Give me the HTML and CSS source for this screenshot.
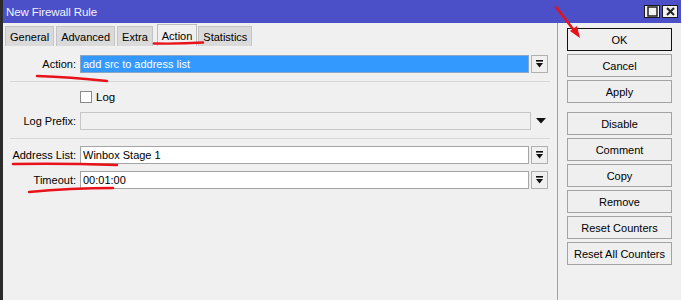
FILE: index.html
```html
<!DOCTYPE html>
<html>
<head>
<meta charset="utf-8">
<link rel="stylesheet" href="styles.css">
</head>
<body>
<div class="window">
  <div class="titlebar">
    <span class="title">New Firewall Rule</span>
    <div class="tbtns">
      <span class="tbtn"><svg width="11" height="11" viewBox="0 0 11 11"><rect x="1" y="1" width="9" height="9" fill="none" stroke="#222" stroke-width="1.5"/></svg></span>
      <span class="tbtn"><svg width="11" height="11" viewBox="0 0 11 11"><path d="M2 2 L9 9 M9 2 L2 9" stroke="#222" stroke-width="2"/></svg></span>
    </div>
  </div>
  <div class="main">
    <div class="left">
      <div class="tabs">
        <span class="tab">General</span>
        <span class="tab">Advanced</span>
        <span class="tab">Extra</span>
        <span class="tab active">Action</span>
        <span class="tab">Statistics</span>
      </div>
      <div class="panel">
        <div class="row r-action">
          <label class="lbl">Action:</label>
          <div class="field sel">add src to address list</div>
          <span class="dd"><svg width="9" height="9" viewBox="0 0 9 9"><rect x="1" y="0" width="7" height="1.6" fill="#111"/><path d="M1 3 H8 L4.5 7.5 Z" fill="#111"/></svg></span>
        </div>
        <div class="sep"></div>
        <div class="row r-log">
          <span class="lbl"></span>
          <span class="check"></span><span class="logtxt">Log</span>
        </div>
        <div class="row r-prefix">
          <label class="lbl">Log Prefix:</label>
          <div class="field dis"></div>
          <span class="arrow"><svg width="10" height="6" viewBox="0 0 10 6"><path d="M0 0 H10 L5 5.5 Z" fill="#111"/></svg></span>
        </div>
        <div class="sep"></div>
        <div class="row r-addr">
          <label class="lbl">Address List:</label>
          <div class="field">Winbox Stage 1</div>
          <span class="dd"><svg width="9" height="9" viewBox="0 0 9 9"><rect x="1" y="0" width="7" height="1.6" fill="#111"/><path d="M1 3 H8 L4.5 7.5 Z" fill="#111"/></svg></span>
        </div>
        <div class="row r-time">
          <label class="lbl">Timeout:</label>
          <div class="field">00:01:00</div>
          <span class="dd"><svg width="9" height="9" viewBox="0 0 9 9"><rect x="1" y="0" width="7" height="1.6" fill="#111"/><path d="M1 3 H8 L4.5 7.5 Z" fill="#111"/></svg></span>
        </div>
      </div>
    </div>
    <div class="right">
      <button class="btn ok">OK</button>
      <button class="btn">Cancel</button>
      <button class="btn">Apply</button>
      <button class="btn gap">Disable</button>
      <button class="btn">Comment</button>
      <button class="btn">Copy</button>
      <button class="btn">Remove</button>
      <button class="btn">Reset Counters</button>
      <button class="btn">Reset All Counters</button>
    </div>
  </div>
  <svg class="marks" width="682" height="300" viewBox="0 0 682 300">
    <g stroke="#e8121a" stroke-width="2.5" fill="none" stroke-linecap="round">
      <path d="M154 43.5 Q180 44 203 42.5"/>
      <path d="M37 76 Q70 77 107 81"/>
      <path d="M13 164 Q60 163 117 165"/>
      <path d="M29 192 Q70 188 113 188"/>
      <path d="M556 7 L576 33"/>
    </g>
    <path d="M580 38 L570 31 L577 26 Z" fill="#e8121a"/>
  </svg>
</div>
</body>
</html>
```

FILE: styles.css
```css
* { box-sizing: border-box; }
html, body { margin: 0; padding: 0; }
body {
  width: 682px;
  height: 300px;
  overflow: hidden;
  font-family: "Liberation Sans", Arial, sans-serif;
  font-size: 11px;
  color: #000;
  background: #f0f0f0;
}
.window {
  position: relative;
  width: 682px;
  height: 300px;
  background: #f0f0f0;
  border-left: 3px solid #2b2b2b;
  border-right: 1px solid #ffffff;
  display: flex;
  flex-direction: column;
}
.titlebar {
  height: 23px;
  flex: none;
  background: #4b4fc8;
  display: flex;
  align-items: center;
  justify-content: space-between;
  padding: 0 3px 0 3px;
}
.title {
  color: #f4f4ff;
  font-size: 11.5px;
  letter-spacing: -0.1px;
}
.tbtns { display: flex; gap: 2px; }
.tbtn {
  width: 16px;
  height: 13px;
  background: #f2f2f2;
  border: 1px solid #1a1a1a;
  display: flex;
  align-items: center;
  justify-content: center;
}
.main {
  flex: 1;
  display: flex;
}
.left {
  width: 555px;
  border-right: 1px solid #a0a0a0;
  display: flex;
  flex-direction: column;
}
.tabs {
  display: flex;
  gap: 2px;
  padding: 3px 0 0 2px;
  height: 23px;
  align-items: flex-end;
}
.tab {
  height: 20px;
  padding: 0 4px;
  background: #dadada;
  border: 1px solid #c4c4c4;
  border-bottom: none;
  display: flex;
  align-items: center;
}
.tab.active {
  height: 22px;
  margin-left: 2px;
  margin-right: -1px;
  background: #f0f0f0;
  border-color: #bdbdbd;
}
.panel {
  flex: 1;
  border-top: 1px solid #f0f0f0;
  padding: 8px 0 0 0;
}
.row {
  display: flex;
  align-items: center;
  height: 18px;
}
.lbl {
  width: 77px;
  flex: none;
  text-align: right;
  padding-right: 4px;
}
.field {
  width: 449px;
  height: 18px;
  background: #fff;
  border: 1px solid #a5a5a5;
  padding: 1px 2px 0 2px;
  line-height: 15px;
  white-space: nowrap;
}
.field.sel {
  background: #3399ff;
  color: #fff;
  border-color: #8aa6c2;
}
.field.dis {
  width: 451px;
  background: #f0f0f0;
  border-color: #c6c6c6;
}
.dd {
  margin-left: 2px;
  width: 17px;
  height: 18px;
  border: 1px solid #b0b0b0;
  background: #f0f0f0;
  display: flex;
  align-items: center;
  justify-content: center;
}
.arrow {
  margin-left: 4px;
  width: 12px;
  display: flex;
  align-items: center;
  justify-content: center;
}
.sep {
  margin: 8px 0 0 7px;
  width: 540px;
  height: 1px;
  background: #d8d8d8;
}
.r-log { margin-top: 9px; height: 12px; }
.check {
  width: 12px;
  height: 12px;
  background: #fff;
  border: 1px solid #8a8a8a;
}
.logtxt { margin-left: 4px; font-size: 11.5px; }
.r-prefix { margin-top: 9px; }
.r-addr { margin-top: 7px; height: 18px; }
.r-time { margin-top: 7px; }
.right {
  flex: 1;
  padding: 5px 0 0 9px;
  display: flex;
  flex-direction: column;
  gap: 3px;
}
.btn {
  width: 105px;
  height: 23px;
  font-family: "Liberation Sans", Arial, sans-serif;
  font-size: 11px;
  color: #000;
  background: #efefef;
  border: 1px solid #a3a3a3;
  padding: 0;
  margin: 0;
}
.btn.ok { border-color: #111; }
.btn.gap { margin-top: 6px; }
.marks {
  position: absolute;
  left: -3px;
  top: 0;
  pointer-events: none;
}
```
